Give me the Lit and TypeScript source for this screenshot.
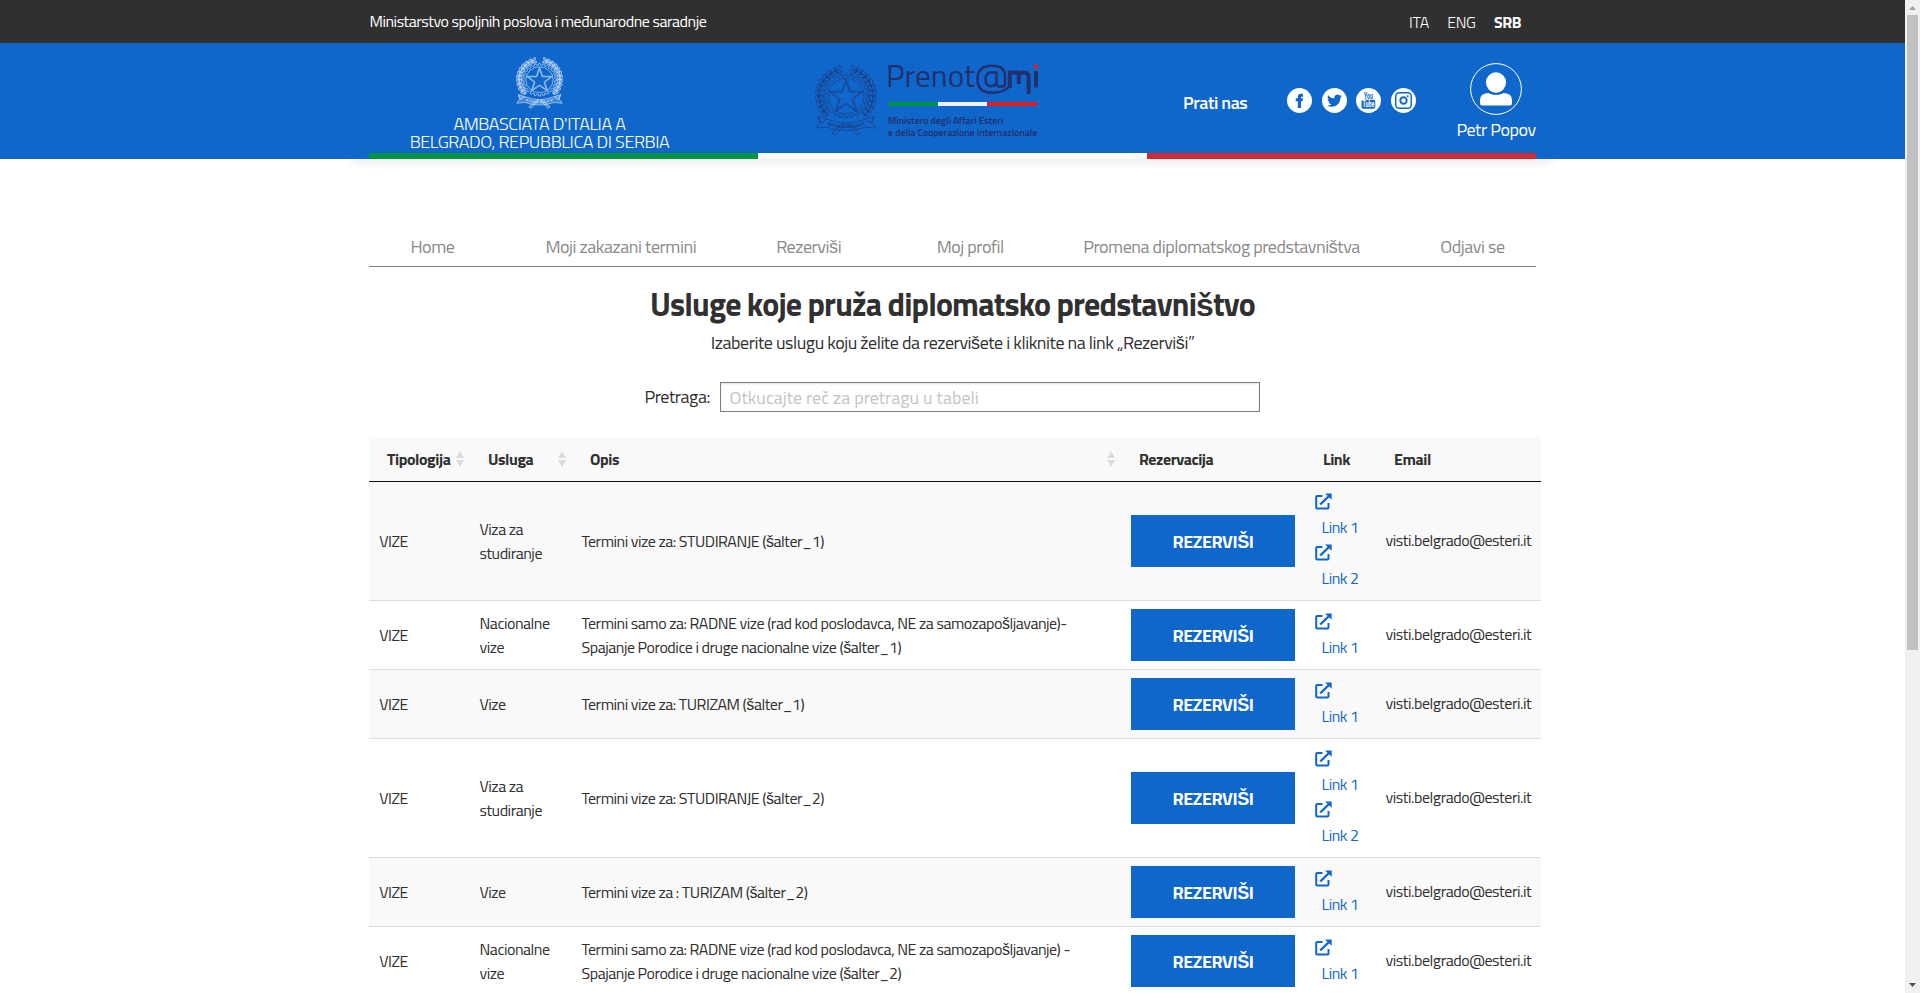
import { LitElement, html, svg, css } from "lit";
import { customElement, property } from "lit/decorators.js";

const pol = (cx: number, cy: number, r: number, deg: number) => {
  const a = (deg * Math.PI) / 180;
  return [cx + r * Math.sin(a), cy - r * Math.cos(a)];
};
const f = (n: number) => n.toFixed(2);

function star(cx: number, cy: number, R: number, r: number) {
  return Array.from({ length: 10 }, (_, i) => pol(cx, cy, i % 2 ? r : R, i * 36).map(f).join(",")).join(" ");
}
function gear(cx: number, cy: number, R: number, r: number, n: number) {
  const s = 360 / n;
  let out: string[] = [];
  for (let i = 0; i < n; i++) {
    out.push(pol(cx, cy, r, i * s - s * 0.27).map(f).join(","));
    out.push(pol(cx, cy, R, i * s - s * 0.2).map(f).join(","));
    out.push(pol(cx, cy, R, i * s + s * 0.2).map(f).join(","));
    out.push(pol(cx, cy, r, i * s + s * 0.27).map(f).join(","));
  }
  return out.join(" ");
}

/* Star, cogwheel, laurel and oak branches, ribbon */
@customElement("state-emblem")
export class StateEmblem extends LitElement {
  @property({ type: Number }) weight = 0.6;
  @property({ type: Number }) tint = 0;
  static styles = css`
    :host { display: block; flex: none; }
    svg { display: block; width: 100%; height: 100%; }
  `;
  render() {
    const leaves = [];
    for (const side of [-1, 1]) {
      for (let i = 0; i < 11; i++) {
        const ang = side * (16 + i * 11.5);
        for (const [r, tilt] of [[25.4, -28], [28.6, 28]]) {
          const [x, y] = pol(31, 31, r, ang);
          leaves.push(svg`<ellipse cx=${f(x)} cy=${f(y)} rx="1.5" ry="3.6"
            transform="rotate(${f(ang + 90 + side * tilt)} ${f(x)} ${f(y)})"/>`);
        }
      }
    }
    return html`<svg viewBox="0 0 62 72" preserveAspectRatio="none" fill="none" stroke="currentColor"
        stroke-width=${this.weight} stroke-linejoin="round">
      <g fill="currentColor" fill-opacity=${this.tint}>${leaves}</g>
      <polygon points=${gear(31, 31.5, 22.5, 20.3, 24)} />
      <circle cx="31" cy="31.5" r="18" />
      <polygon points=${star(31, 32.5, 18.5, 7.4)} />
      <polygon points=${star(31, 32.5, 15.8, 6.1)} />
      <g fill="currentColor" fill-opacity=${this.tint}>
        <path d="M3 52 L12 55 Q31 63 50 55 L59 52 L57 58 L61 64 L50 63 Q31 70 12 63 L1 64 L5 58 Z" />
        <path d="M17 69 L27 60 L30 60 L20 71 Z M45 69 L35 60 L32 60 L42 71 Z" />
        <path d="M3 52 L6 59 L12 55 M59 52 L56 59 L50 55" />
      </g>
      <path stroke-dasharray="1 .9" stroke-width="3" opacity=".75" d="M13 59 Q31 66.500 49 59" />
    </svg>`;
  }
}

type Row = { usluga: string[]; opis: string[]; links: number };
const ROWS: Row[] = [
  { usluga: ["Viza za", "studiranje"], opis: ["Termini vize za: STUDIRANJE (šalter_1)"], links: 2 },
  { usluga: ["Nacionalne", "vize"], opis: ["Termini samo za: RADNE vize (rad kod poslodavca, NE za samozapošljavanje)-", "Spajanje Porodice i druge nacionalne vize (šalter_1)"], links: 1 },
  { usluga: ["Vize"], opis: ["Termini vize za: TURIZAM (šalter_1)"], links: 1 },
  { usluga: ["Viza za", "studiranje"], opis: ["Termini vize za: STUDIRANJE (šalter_2)"], links: 2 },
  { usluga: ["Vize"], opis: ["Termini vize za : TURIZAM (šalter_2)"], links: 1 },
  { usluga: ["Nacionalne", "vize"], opis: ["Termini samo za: RADNE vize (rad kod poslodavca, NE za samozapošljavanje) -", "Spajanje Porodice i druge nacionalne vize (šalter_2)"], links: 1 },
];

/* The caron s is set in the secondary sans face */
const caron = (t: string) => t.split(/([šŠ])/).map((p) => (/^[šŠ]$/.test(p) ? html`<span class="s">${p}</span>` : p));

const sorter = html`<svg class="sort" viewBox="0 0 8 16"><path d="M4 0L8 7H0ZM0 9H8L4 16Z" /></svg>`;
const external = html`<svg class="ext" viewBox="0 0 17 17"><path fill="none" stroke="currentColor" stroke-width="2" stroke-linejoin="round" d="M7.500 3H2.200Q1.200 3 1.200 4V14.500Q1.200 15.500 2.200 15.500H12.500Q13.500 15.500 13.500 14.500V10" /><path fill="none" stroke="currentColor" stroke-width="2.400" d="M5.200 11.500L14 3" /><path fill="currentColor" d="M10 .5H16.700V6.800Z" /></svg>`;

@customElement("app-root")
export class AppRoot extends LitElement {
  static styles = css`
    :host { display: flex; width: 100%; height: 993px; overflow: hidden; background: #fff; color: #303030;
      font-family: "Titillium Web", Roboto, "Liberation Sans", sans-serif; font-size: 16px; line-height: 24px; font-weight: 400; letter-spacing: -0.475px; }
    * { box-sizing: border-box; }
    .s { font-family: "Liberation Sans", sans-serif; line-height: 1; }
    .page { flex: 1; min-width: 0; height: 100%; overflow: hidden; }
    .wrap { width: 1168px; margin: 0 auto; }
    .top { background: #303030; color: #fff; height: 43px; }
    .top .wrap { display: flex; justify-content: space-between; align-items: center; height: 43px; padding: 0 15.500px 1px 1px; }
    .langs { display: flex; gap: 18.500px; padding-top: 1px; }
    .langs span { font-weight: 300; letter-spacing: -0.4px; }
    .langs b { font-weight: 700; }
    .head { background: #0f67cb; color: #fff; height: 116px; }
    .head .wrap { display: flex; height: 110px; }
    .head .wrap > div { flex: none; }
    .embassy { width: 342px; padding-top: 14px; text-align: center; font-size: 18px; line-height: 18px; font-weight: 300; letter-spacing: -0.43px; white-space: nowrap; }
    .embassy state-emblem { width: 47px; height: 52px; margin: 0 auto 6px; color: #d8e8fb; }
    .logo { display: flex; margin-left: 104.500px; width: 224px; color: #22306e; padding-top: 22px; }
    .logo state-emblem { width: 62px; height: 71px; margin-right: 11px; }
    .brand { width: 149px; flex: none; }
    .stripe { display: flex; height: 4px; margin-bottom: 9px; }
    .stripe i { flex: 1; }
    .g { background: #009246; } .w { background: #f1f2f6; } .r { background: #dd2127; }
    .wordsvg { display: block; width: 152px; height: 37px; overflow: visible; letter-spacing: 0; font-weight: 400; }
    .small { display: block; font-size: 9.850px; line-height: 12px; font-weight: 600; white-space: nowrap; letter-spacing: 0; }
    .follow { margin-left: 144px; padding-top: 48px; font-size: 18px; font-weight: 600; letter-spacing: -0.45px; width: 104px; }
    .social { display: flex; gap: 9.700px; padding-top: 45px; width: 130px; }
    .social svg { width: 25px; height: 25px; flex: none; letter-spacing: 0; }
    .user { margin-left: 31.500px; width: 95px; display: flex; flex-direction: column; align-items: center; padding-top: 20px; font-size: 18px; letter-spacing: -0.45px; white-space: nowrap; }
    .user svg { width: 52px; height: 52px; margin-bottom: 3px; }
    .flag { position: relative; width: 1200px; height: 6px; margin: 0 auto; padding: 0 16px; display: flex; background: #0f67cb; box-shadow: 0 2px 10px rgba(120, 110, 90, 0.22); }
    .flag i { flex: 1; }
    .flag .w { background: #fff; } .flag .r { background: #ce2b37; } .flag .g { background: #009246; }
    nav { display: flex; margin-top: 64px; width: 1167px; height: 44px; border-bottom: 1px solid #808080; color: #8a8a8a; font-size: 18px; line-height: 47px; letter-spacing: -0.45px; padding: 0 0 0 42px; white-space: nowrap; }
    nav a { flex: none; height: 40px; }
    h1 { margin: 17px 0 0; font-size: 32px; line-height: 40px; font-weight: 700; letter-spacing: -0.84px; text-align: center; }
    .sub { margin: 7px 0 0; font-size: 18px; letter-spacing: -0.45px; text-align: center; }
    .search { display: flex; align-items: center; margin: 27px 0 0; padding-left: 276px; font-size: 18px; letter-spacing: -0.45px; }
    .search label { width: 75px; }
    .search input { width: 540px; height: 30px; border: 1px solid #808080; padding: 1px 9px 0; font: inherit; letter-spacing: 0; box-shadow: inset 0 1px 2px rgba(0, 0, 0, 0.12); outline: none; border-radius: 0; }
    .search input::placeholder { color: #c4c4c4; opacity: 1; }
    .table { width: 1172px; margin-top: 25px; background: #fff; }
    .tr { display: grid; grid-template-columns: 101px 102px 549px 184px 71px 165px; align-items: center; height: 69px; border-bottom: 1px solid #ddd; white-space: nowrap; }
    .tr.two { height: 119px; }
    .tr.alt { background: #f9f9f9; }
    .tr > div { padding-left: 10px; }
    .tr > div:first-child { padding-left: 10.700px; }
    .tr.th { background: #f9f9f9; height: 45px; border-bottom: 1px solid #111; font-weight: 700; letter-spacing: -0.42px; }
    .tr.th > div { padding: 0 6px 1px 18.500px; display: flex; justify-content: space-between; align-items: center; }
    .sort { width: 8px; height: 16px; fill: #dcdcdc; flex: none; }
    .l { display: block; height: 24px; }
    .embassy .l { height: 18px; }
    .btn { display: block; width: 164px; height: 52px; border: 0; padding: 1px 0 0 1px; background: #0f67cb; color: #fff; font: inherit; font-weight: 700; font-size: 18px; line-height: 51px; letter-spacing: -0.45px; }
    .link { display: block; height: 51px; padding-top: 3px; color: #0f67cb; }
    .ext { display: block; width: 17px; height: 17px; }
    .link span { display: block; padding: 5px 0 0 7px; }
    .mail { padding-bottom: 2px; letter-spacing: -0.45px; }
    .bar { width: 15px; background: #f0f0f0; display: flex; flex-direction: column; align-items: center; }
    .thumb { width: 11px; height: 635px; background: #c1c1c1; }
    .bar svg { width: 7px; height: 4px; margin: 6px 0 5px; }
    .bar svg.dn { margin: auto 0 6px; }
  `;

  render() {
    const nav: [string, number][] = [["Home", 91], ["Moji zakazani termini", 80], ["Rezerviši", 95.5], ["Moj profil", 79.5], ["Promena diplomatskog predstavništva", 80.5], ["Odjavi se", 0]];
    return html`
      <div class="page">
        <div class="top"><div class="wrap">
          <span class="ministry">Ministarstvo spoljnih poslova i međunarodne saradnje</span>
          <span class="langs"><span>ITA</span><span>ENG</span><b>SRB</b></span>
        </div></div>
        <div class="head">
          <div class="wrap">
            <div class="embassy">
              <state-emblem .weight=${0.8} .tint=${0.25}></state-emblem>
              <span class="l">AMBASCIATA D'ITALIA A</span><span class="l">BELGRADO, REPUBBLICA DI SERBIA</span>
            </div>
            <div class="logo">
              <state-emblem .weight=${0.55} .tint=${0}></state-emblem>
              <div class="brand">
                <svg class="wordsvg" viewBox="0 0 152 37" fill="#22306e">
                  <text x="-2" y="22" font-size="31.5" textLength="89" lengthAdjust="spacingAndGlyphs">Prenot</text>
                  <g fill="none" stroke="#22306e" stroke-width="2.500">
                    <path d="M108.500 6.500V18.500Q108.500 21.500 112 21.500H115.500Q117 21.500 117 19V11Q117 .8 104 .8Q89.500 .8 89.500 14Q89.500 27.800 104 27.800Q116 27.500 122 21" />
                    <path d="M108.500 7.500H103Q97.500 7.500 97.500 14.500Q97.500 21.200 103 21.200Q107 21 108.500 17.500" />
                  </g>
                  <g fill="none" stroke="#22306e" stroke-width="4">
                    <path d="M121.800 23V7.600H128Q130.800 7.600 130.800 11V19M130.800 11.500Q130.800 7.600 135 7.600Q140.600 7.600 140.600 12V29" />
                    <path d="M148 6V22.500" />
                  </g>
                  <rect x="146" y="-.5" width="4" height="4" fill="#dd2127" />
                </svg>
                <div class="stripe"><i class="g"></i><i class="w"></i><i class="r"></i></div>
                <span class="small">Ministero degli Affari Esteri</span><span class="small">e della Cooperazione Internazionale</span>
              </div>
            </div>
            <div class="follow">Prati nas</div>
            <div class="social">
              <svg viewBox="0 0 25 25"><circle cx="12.500" cy="12.500" r="12.500" fill="#fff" /><path fill="#0f67cb" d="M10.800 20V13.300H8.700V10.300H10.800V8.700Q10.800 5.800 14 5.800H16V8.800H14.800Q14 8.800 14 9.600V10.300H16L15.700 13.300H14V20Z" /></svg>
              <svg viewBox="0 0 25 25"><circle cx="12.500" cy="12.500" r="12.500" fill="#fff" /><path fill="#0f67cb" transform="translate(5.200 5) scale(.62)" d="M23.600 4.900c-.9.400-1.800.700-2.800.8 1-.6 1.800-1.600 2.200-2.700-1 .6-2 1-3.100 1.200A4.900 4.900 0 0 0 11.500 8.700C7.400 8.500 3.800 6.500 1.400 3.600c-1.300 2.200-.7 5.100 1.500 6.600-.8 0-1.600-.2-2.200-.6-.1 2.300 1.600 4.400 3.900 4.900-.7.200-1.500.2-2.200.1.600 2 2.400 3.400 4.600 3.400A9.900 9.900 0 0 1-.2 20 14 14 0 0 0 7.300 22.200c9.100 0 14.300-7.700 14-14.600 1-.7 1.800-1.600 2.300-2.700z" /></svg>
              <svg viewBox="0 0 25 25"><circle cx="12.500" cy="12.500" r="12.500" fill="#fff" /><text x="12.500" y="11" text-anchor="middle" font-family="Liberation Sans Narrow, Roboto" font-weight="700" font-size="8.500" textLength="9" lengthAdjust="spacingAndGlyphs" fill="#0f67cb">You</text><rect x="5.500" y="11.800" width="13.800" height="9" rx="2" fill="#0f67cb" /><text x="12.400" y="19.300" text-anchor="middle" font-family="Liberation Sans Narrow, Roboto" font-weight="700" font-size="8.500" textLength="12" lengthAdjust="spacingAndGlyphs" fill="#fff">Tube</text></svg>
              <svg viewBox="0 0 25 25"><circle cx="12.500" cy="12.500" r="12.500" fill="#fff" /><g fill="none" stroke="#0f67cb"><rect x="4.700" y="4.700" width="15.600" height="15.600" rx="3.500" stroke-width="1.500" /><circle cx="12.500" cy="12.500" r="3.200" stroke-width="1.900" /></g><circle cx="16.700" cy="8.300" r="1" fill="#0f67cb" /></svg>
            </div>
            <div class="user">
              <svg viewBox="0 0 52 52"><circle cx="26" cy="26" r="25.400" fill="none" stroke="#fff" /><path fill="#fff" d="M10 40V37Q10 30.500 18 30Q26 34 34 30Q42 30.500 42 37V40Q42 42.500 39.500 42.500H12.500Q10 42.500 10 40Z" /><ellipse cx="26" cy="19.500" rx="10.800" ry="11.100" fill="#fff" stroke="#0f67cb" stroke-width="1.500" /></svg>
              Petr Popov
            </div>
          </div>
          <div class="flag"><i class="g"></i><i class="w"></i><i class="r"></i></div>
        </div>
        <div class="wrap">
          <nav>${nav.map(([t, gap]) => html`<a style="margin-right:${gap}px">${caron(t)}</a>`)}</nav>
          <h1>${caron("Usluge koje pruža diplomatsko predstavništvo")}</h1>
          <p class="sub">${caron("Izaberite uslugu koju želite da rezervišete i kliknite na link „Rezerviši”")}</p>
          <div class="search"><label>Pretraga:</label><input placeholder="Otkucajte reč za pretragu u tabeli" /></div>
          <div class="table">
            <div class="tr th">
              <div>Tipologija${sorter}</div><div>Usluga${sorter}</div><div>Opis${sorter}</div>
              <div>Rezervacija</div><div>Link</div><div>Email</div>
            </div>
            ${ROWS.map((r, i) => html`<div class="tr ${i % 2 ? "" : "alt"} ${r.links > 1 ? "two" : ""}">
              <div>VIZE</div>
              <div>${r.usluga.map((t) => html`<span class="l">${t}</span>`)}</div>
              <div>${r.opis.map((t) => html`<span class="l">${caron(t)}</span>`)}</div>
              <div><button class="btn">${caron("REZERVIŠI")}</button></div>
              <div>${Array.from({ length: r.links }, (_, k) => html`<a class="link">${external}<span>Link ${k + 1}</span></a>`)}</div>
              <div class="mail">visti.belgrado@esteri.it</div>
            </div>`)}
          </div>
        </div>
      </div>
      <div class="bar">
        <svg viewBox="0 0 7 4"><path fill="#a3a3a3" d="M3.500 0L7 4H0Z" /></svg>
        <div class="thumb"></div>
        <svg class="dn" viewBox="0 0 7 4"><path fill="#505050" d="M0 0H7L3.500 4Z" /></svg>
      </div>`;
  }
}
